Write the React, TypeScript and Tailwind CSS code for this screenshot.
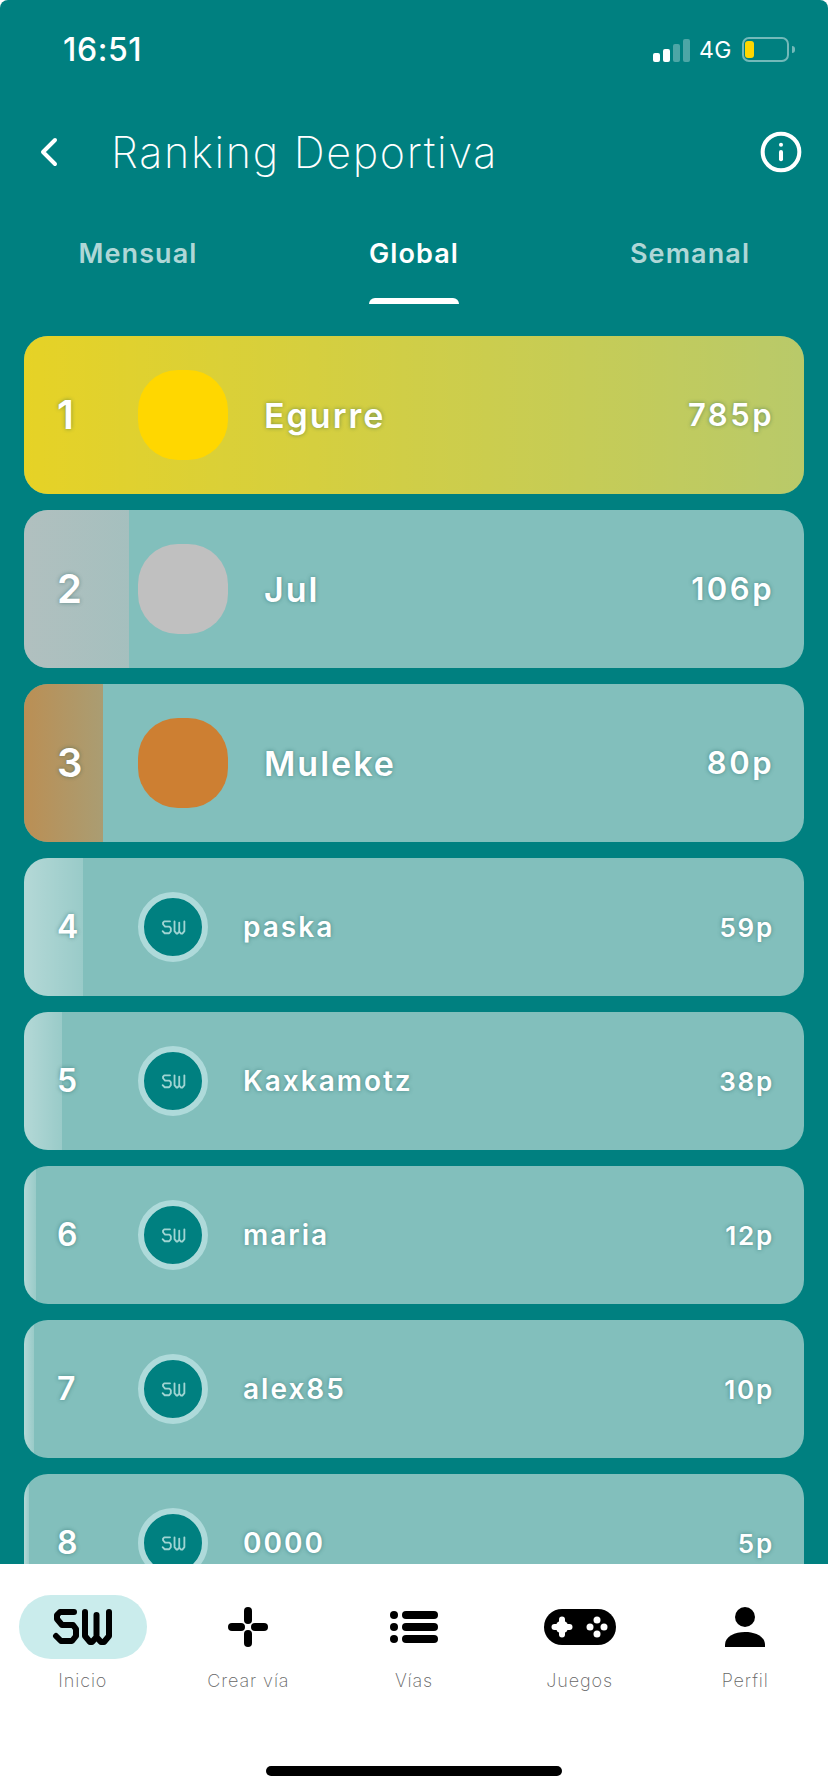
import { Info } from "lucide-react";

type Player = { pos: number; name: string; points: number };

const players: Player[] = [
  { pos: 1, name: "Egurre", points: 785 },
  { pos: 2, name: "Jul", points: 106 },
  { pos: 3, name: "Muleke", points: 80 },
  { pos: 4, name: "paska", points: 59 },
  { pos: 5, name: "Kaxkamotz", points: 38 },
  { pos: 6, name: "maria", points: 12 },
  { pos: 7, name: "alex85", points: 10 },
  { pos: 8, name: "0000", points: 5 },
];

const MAX_POINTS = 785;

const medals: Record<number, { avatar: string; bar: string }> = {
  1: { avatar: "bg-[#ffd700]", bar: "from-[#ffd700cc] to-[#ffd70070]" },
  2: { avatar: "bg-[#c0c0c0]", bar: "from-[#c0c0c0c0] to-[#c0c0c090]" },
  3: { avatar: "bg-[#cd7f32]", bar: "from-[#cd7f32c0] to-[#cd7f3288]" },
};

function SwLogo({ className, stroke = 6 }: { className: string; stroke?: number }) {
  return (
    <svg viewBox="0 0 61 36" className={className} fill="none" stroke="currentColor" strokeWidth={stroke} strokeLinecap="round" strokeLinejoin="round">
      <path d="M22 3H8L5 6V10L10 16H21L24 20V27L20 32H9L4 27" />
      <path d="M33 3V27L38 33H40L44.5 28L49 33H52L57 27V3M44.5 6V28" />
    </svg>
  );
}

function StatusBar() {
  return (
    <div className="flex h-[123px] shrink-0 items-start justify-between pl-[63px] pr-[33px] pt-[31px] text-white">
      <span className="text-[32px] font-medium leading-[38px] tracking-[0.6px]">16:51</span>
      <div className="flex items-end pt-[6px]">
        <div className="flex items-end gap-[3px]">
          <span className="h-[9px] w-[7px] rounded-[2px] bg-white" />
          <span className="h-[13px] w-[7px] rounded-[2px] bg-white" />
          <span className="h-[18px] w-[7px] rounded-[2px] bg-white/30" />
          <span className="h-[23px] w-[7px] rounded-[2px] bg-white/30" />
        </div>
        <span className="ml-[9px] text-[23px] leading-[24px] tracking-[0.5px]">4G</span>
        <div className="ml-[10px] flex h-[25px] w-[47px] items-center rounded-[7px] border-2 border-white/45 pl-[1px]">
          <span className="h-[17px] w-[9px] rounded-[3px] bg-[#ffd700]" />
        </div>
        <span className="mb-[9px] ml-[3px] h-[7px] w-[3px] rounded-r-full bg-white/45" />
      </div>
    </div>
  );
}

function Header() {
  return (
    <div className="flex h-[58px] shrink-0 items-center pl-[34px] pr-[25px] text-white">
      <svg viewBox="0 0 24 32" className="h-[32px] w-[24px]" fill="none" stroke="currentColor" strokeWidth="4" strokeLinecap="round" strokeLinejoin="round">
        <path d="M21 4L9 16L21 28" />
      </svg>
      <h1 className="ml-[53px] flex-1 text-[43px] font-extralight leading-none tracking-[1.7px]">Ranking Deportiva</h1>
      <Info className="h-[44px] w-[44px]" strokeWidth={2.2} />
    </div>
  );
}

function Tabs() {
  const tabs = ["Mensual", "Global", "Semanal"];
  return (
    <div className="mt-[48px] grid h-[75px] shrink-0 grid-cols-3">
      {tabs.map((tab) => (
        <div key={tab} className="flex flex-col items-center">
          <span className={`relative h-[75px] pt-[9px] text-[27px] font-semibold leading-[32px] tracking-[1.1px] ${tab === "Global" ? "text-white" : "text-white/70"}`}>
            {tab}
            {tab === "Global" && (
              <span className="absolute bottom-0 left-0 right-0 h-[6px] rounded-t-[6px] bg-white" />
            )}
          </span>
        </div>
      ))}
    </div>
  );
}

function Row({ player }: { player: Player }) {
  const medal = medals[player.pos];
  const big = !!medal;
  return (
    <div className={`relative flex shrink-0 items-center overflow-hidden rounded-[24px] bg-[#82bfbc] pl-[33px] pr-[30px] font-semibold text-white [text-shadow:0_0_4px_rgba(0,70,70,0.45)] ${big ? "h-[158px]" : "h-[138px]"}`}>
      <div
        className={`absolute inset-y-0 left-0 bg-gradient-to-r ${medal ? medal.bar : "from-[#ffffff66] to-[#ffffff30]"}`}
        style={{ width: `${(player.points / MAX_POINTS) * 100}%` }}
      />
      <span className={`relative w-[81px] shrink-0 ${big ? "text-[40px]" : "text-[32px]"}`}>{player.pos}</span>
      {medal ? (
        <div className={`relative h-[90px] w-[90px] shrink-0 rounded-[40px] ${medal.avatar}`} />
      ) : (
        <div className="relative flex h-[70px] w-[70px] shrink-0 items-center justify-center rounded-full border-[6px] border-[#aedada] bg-[#008080] text-[#9fd4d2]">
          <SwLogo className="h-[15px] w-[25px]" stroke={4.5} />
        </div>
      )}
      <span className={`relative flex-1 tracking-[2px] ${big ? "ml-[36px] text-[34px]" : "ml-[35px] text-[28px]"}`}>{player.name}</span>
      <span className={`relative ${big ? "text-[31px] tracking-[2.5px]" : "text-[26px] tracking-[1.8px]"}`}>{player.points}p</span>
    </div>
  );
}

const navItems = [
  {
    label: "Inicio",
    active: true,
    icon: <SwLogo className="h-[36px] w-[61px]" />,
  },
  {
    label: "Crear vía",
    icon: (
      <svg viewBox="0 0 40 40" className="h-[40px] w-[40px]" fill="currentColor">
        <rect x="16" y="0" width="8" height="17" rx="4" />
        <rect x="16" y="23" width="8" height="17" rx="4" />
        <rect x="0" y="16" width="17" height="8" rx="4" />
        <rect x="23" y="16" width="17" height="8" rx="4" />
      </svg>
    ),
  },
  {
    label: "Vías",
    icon: (
      <svg viewBox="0 0 48 32" className="h-[32px] w-[48px]" fill="currentColor">
        <circle cx="4" cy="4" r="4" />
        <circle cx="4" cy="16" r="4" />
        <circle cx="4" cy="28" r="4" />
        <rect x="12" y="0" width="36" height="8" rx="4" />
        <rect x="12" y="12" width="36" height="8" rx="4" />
        <rect x="12" y="24" width="36" height="8" rx="4" />
      </svg>
    ),
  },
  {
    label: "Juegos",
    icon: (
      <svg viewBox="0 0 72 36" className="h-[36px] w-[72px]">
        <rect width="72" height="36" rx="18" fill="currentColor" />
        <circle cx="18" cy="18" r="6.5" fill="#fff" />
        <rect x="15" y="7.5" width="6" height="21" rx="3" fill="#fff" />
        <rect x="7.5" y="15" width="21" height="6" rx="3" fill="#fff" />
        <circle cx="53" cy="11" r="3.5" fill="#fff" />
        <circle cx="53" cy="25" r="3.5" fill="#fff" />
        <circle cx="46" cy="18" r="3.5" fill="#fff" />
        <circle cx="60" cy="18" r="3.5" fill="#fff" />
      </svg>
    ),
  },
  {
    label: "Perfil",
    icon: (
      <svg viewBox="0 0 40 40" className="h-[40px] w-[40px]" fill="currentColor">
        <circle cx="20" cy="10" r="10" />
        <path d="M0 40V38C0 29 10 25 20 25C30 25 40 29 40 38V40Z" />
      </svg>
    ),
  },
];

function BottomNav() {
  return (
    <div className="flex h-[228px] shrink-0 flex-col bg-white">
      <div className="grid grid-cols-5 pt-[31px]">
        {navItems.map((item) => (
          <div key={item.label} className="flex flex-col items-center">
            <div className={`flex h-[64px] w-[128px] items-center justify-center rounded-full text-black ${item.active ? "bg-[#caecec]" : ""}`}>
              {item.icon}
            </div>
            <span className="mt-[10px] text-[18px] font-extralight leading-[24px] tracking-[0.9px] text-[#666]">{item.label}</span>
          </div>
        ))}
      </div>
      <div className="mx-auto mt-[73px] h-[10px] w-[296px] rounded-full bg-black" />
    </div>
  );
}

export default function App() {
  return (
    <div className="flex h-[1792px] w-[828px] flex-col overflow-hidden rounded-t-[8px] bg-[#008080] font-['Inter',sans-serif]">
      <StatusBar />
      <Header />
      <Tabs />
      <div className="flex min-h-0 flex-1 flex-col gap-[16px] overflow-hidden px-[24px] pt-[32px]">
        {players.map((p) => (
          <Row key={p.pos} player={p} />
        ))}
      </div>
      <BottomNav />
    </div>
  );
}
